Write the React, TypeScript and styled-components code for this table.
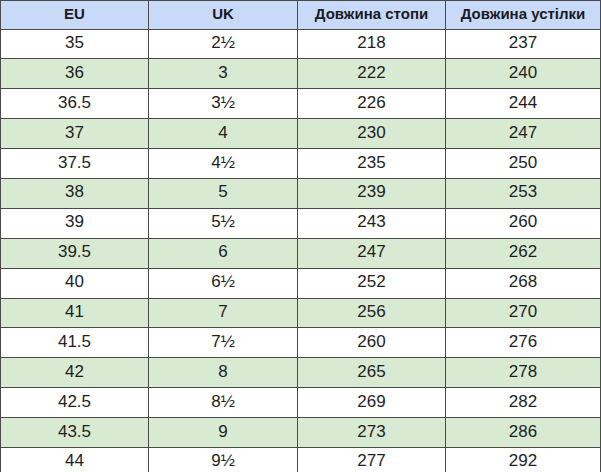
import styled, { createGlobalStyle } from 'styled-components';

const GlobalStyle = createGlobalStyle`
  html, body {
    margin: 0;
    padding: 0;
    background: #ffffff;
  }
  body {
    font-family: "Liberation Sans", Arial, sans-serif;
    overflow: hidden;
  }
`;

const Table = styled.table`
  width: 600px;
  border-collapse: collapse;
  table-layout: fixed;
  color: #1e1e1e;
`;

const HeadCell = styled.th`
  height: 25.5px;
  padding: 0 0 2px 0;
  background: #c9daf8;
  border: 1.5px solid #4a4a4a;
  font-size: 15px;
  font-weight: bold;
  color: #1a1a24;
  text-align: center;
  vertical-align: middle;
`;

const Row = styled.tr<{ $shade: boolean }>`
  background: ${(p) => (p.$shade ? '#d9ead3' : '#ffffff')};
`;

const Cell = styled.td`
  height: 26.9px;
  padding: 0 0 2px 0;
  border: 1.5px solid #4a4a4a;
  font-size: 17px;
  text-align: center;
  vertical-align: middle;
`;

const rows: [string, string, number, number][] = [
  ['35', '2½', 218, 237],
  ['36', '3', 222, 240],
  ['36.5', '3½', 226, 244],
  ['37', '4', 230, 247],
  ['37.5', '4½', 235, 250],
  ['38', '5', 239, 253],
  ['39', '5½', 243, 260],
  ['39.5', '6', 247, 262],
  ['40', '6½', 252, 268],
  ['41', '7', 256, 270],
  ['41.5', '7½', 260, 276],
  ['42', '8', 265, 278],
  ['42.5', '8½', 269, 282],
  ['43.5', '9', 273, 286],
  ['44', '9½', 277, 292],
];

export default function App() {
  return (
    <>
      <GlobalStyle />
      <Table>
        <colgroup>
          <col style={{ width: 148 }} />
          <col style={{ width: 149 }} />
          <col style={{ width: 148 }} />
          <col style={{ width: 155 }} />
        </colgroup>
        <thead>
          <tr>
            <HeadCell>EU</HeadCell>
            <HeadCell>UK</HeadCell>
            <HeadCell>Довжина стопи</HeadCell>
            <HeadCell>Довжина устілки</HeadCell>
          </tr>
        </thead>
        <tbody>
          {rows.map(([eu, uk, foot, insole], i) => (
            <Row key={eu} $shade={i % 2 === 1}>
              <Cell>{eu}</Cell>
              <Cell>{uk}</Cell>
              <Cell>{foot}</Cell>
              <Cell>{insole}</Cell>
            </Row>
          ))}
        </tbody>
      </Table>
    </>
  );
}
